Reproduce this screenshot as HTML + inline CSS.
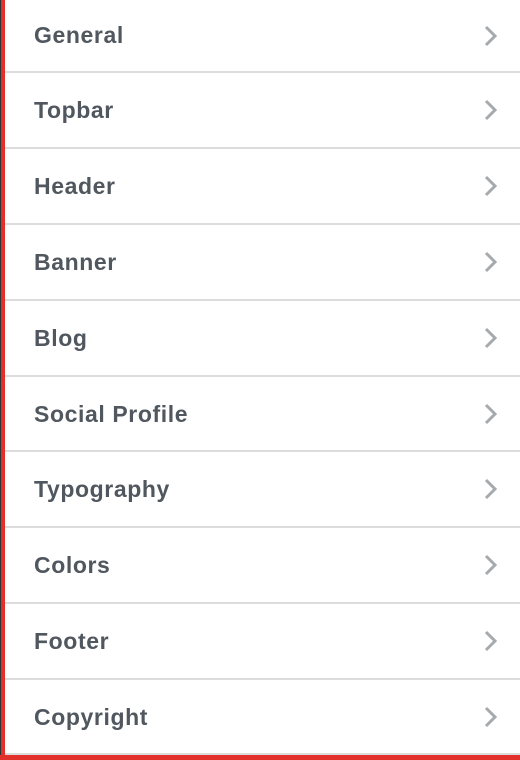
<!DOCTYPE html>
<html><head><style>
html,body{margin:0;padding:0;width:520px;height:760px;overflow:hidden;background:#fff;font-family:"Liberation Sans",Arial,sans-serif}
.wrap{position:absolute;left:0;top:0;width:520px;height:760px;border-left:1px solid #333;box-sizing:border-box}
.red{position:absolute;left:1px;top:0;width:4px;height:760px;background:#e2302a}
.redb{position:absolute;left:0;top:755px;width:520px;height:5px;background:#e2302a}
.row{position:absolute;left:5px;width:515px;border-bottom:2px solid #dcdcde;box-sizing:border-box}
.row span{position:absolute;left:29px;font-size:23px;color:#50575e;font-weight:600;letter-spacing:0.6px}
.row svg{position:absolute;left:478px}
</style></head><body>
<div class="wrap"></div>
<div class="red"></div>
<div class="row" style="top:0;height:73px"><span style="top:22px">General</span><svg style="top:25px" width="16" height="22" viewBox="0 0 16 22"><path d="M3 2 L12 11 L3 20" fill="none" stroke="#a7aaad" stroke-width="3"/></svg></div>
<div class="row" style="top:73px;height:76px"><span style="top:24px">Topbar</span><svg style="top:26px" width="16" height="22" viewBox="0 0 16 22"><path d="M3 2 L12 11 L3 20" fill="none" stroke="#a7aaad" stroke-width="3"/></svg></div>
<div class="row" style="top:149px;height:76px"><span style="top:24px">Header</span><svg style="top:26px" width="16" height="22" viewBox="0 0 16 22"><path d="M3 2 L12 11 L3 20" fill="none" stroke="#a7aaad" stroke-width="3"/></svg></div>
<div class="row" style="top:225px;height:76px"><span style="top:24px">Banner</span><svg style="top:26px" width="16" height="22" viewBox="0 0 16 22"><path d="M3 2 L12 11 L3 20" fill="none" stroke="#a7aaad" stroke-width="3"/></svg></div>
<div class="row" style="top:301px;height:76px"><span style="top:24px">Blog</span><svg style="top:26px" width="16" height="22" viewBox="0 0 16 22"><path d="M3 2 L12 11 L3 20" fill="none" stroke="#a7aaad" stroke-width="3"/></svg></div>
<div class="row" style="top:377px;height:75px"><span style="top:24px">Social Profile</span><svg style="top:26px" width="16" height="22" viewBox="0 0 16 22"><path d="M3 2 L12 11 L3 20" fill="none" stroke="#a7aaad" stroke-width="3"/></svg></div>
<div class="row" style="top:452px;height:76px"><span style="top:24px">Typography</span><svg style="top:26px" width="16" height="22" viewBox="0 0 16 22"><path d="M3 2 L12 11 L3 20" fill="none" stroke="#a7aaad" stroke-width="3"/></svg></div>
<div class="row" style="top:528px;height:76px"><span style="top:24px">Colors</span><svg style="top:26px" width="16" height="22" viewBox="0 0 16 22"><path d="M3 2 L12 11 L3 20" fill="none" stroke="#a7aaad" stroke-width="3"/></svg></div>
<div class="row" style="top:604px;height:76px"><span style="top:24px">Footer</span><svg style="top:26px" width="16" height="22" viewBox="0 0 16 22"><path d="M3 2 L12 11 L3 20" fill="none" stroke="#a7aaad" stroke-width="3"/></svg></div>
<div class="row" style="top:680px;height:75px"><span style="top:24px">Copyright</span><svg style="top:26px" width="16" height="22" viewBox="0 0 16 22"><path d="M3 2 L12 11 L3 20" fill="none" stroke="#a7aaad" stroke-width="3"/></svg></div>
<div class="redb"></div>
</body></html>
